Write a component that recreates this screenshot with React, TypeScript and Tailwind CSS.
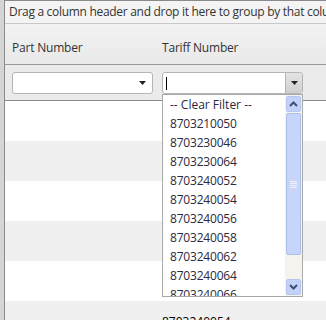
import React from 'react';

const items = [
  '8703210050',
  '8703230046',
  '8703230064',
  '8703240052',
  '8703240054',
  '8703240056',
  '8703240058',
  '8703240062',
  '8703240064',
  '8703240066',
];

const Caret = () => (
  <svg width="7" height="4" viewBox="0 0 7 4">
    <path d="M0 0h7L3.5 4z" fill="#222" />
  </svg>
);

const Chevron = ({ up }: { up?: boolean }) => (
  <svg width="9" height="6" viewBox="0 0 9 6">
    <path d={up ? 'M1 5L4.5 1.5L8 5' : 'M1 1L4.5 4.5L8 1'} stroke="#3a4f7a" strokeWidth="2" fill="none" />
  </svg>
);

export default function App() {
  return (
    <div
      className="w-[326px] h-[320px] overflow-hidden flex bg-white text-[12px] text-[#333]"
      style={{ fontFamily: '"Open Sans", "Noto Sans", sans-serif' }}
    >
      <div className="w-[4px] shrink-0 bg-[#d5d5d5]" />
      <div className="flex-1 border-l border-t border-[#8a8a8a] flex flex-col relative">
        <div className="h-[23px] shrink-0 bg-[#f4f4f4] pl-[4px] flex items-center whitespace-nowrap tracking-[-0.3px] border-b border-[#c8c8c8]">
          Drag a column header and drop it here to group by that column
        </div>
        <div className="h-[41px] shrink-0 bg-gradient-to-b from-[#f2f2f2] to-[#e9e9e9] flex items-center pt-[7px] border-b border-[#9a9a9a] tracking-[-0.2px]">
          <div className="w-[150px] pl-[7px]">Part Number</div>
          <div className="pl-[7px]">Tariff Number</div>
        </div>
        <div className="h-[36px] shrink-0 bg-[#ebebeb] flex items-start pt-[7px] border-b border-[#8a8a8a]">
          <div className="ml-[7px] w-[141px] h-[22px] bg-white border border-[#b5b5b5] rounded-[3px] flex items-center justify-end pr-[6px]">
            <Caret />
          </div>
          <div className="ml-[9px] w-[141px] h-[22px] bg-white border border-[#b5b5b5] rounded-[3px] flex items-center">
            <div className="flex-1 pl-[3px] flex items-center">
              <div className="w-px h-[13px] bg-black" />
            </div>
            <div className="w-[17px] h-full bg-gradient-to-b from-[#e4e4e4] to-[#cfcfcf] border-l border-[#b5b5b5] flex items-center justify-center rounded-r-[2px]">
              <Caret />
            </div>
          </div>
        </div>
        <div className="flex-1 flex flex-col">
          <div className="h-[40px] shrink-0 bg-white" />
          <div className="h-[40px] shrink-0 bg-[#f0f0f0]" />
          <div className="h-[40px] shrink-0 bg-white" />
          <div className="h-[40px] shrink-0 bg-[#f0f0f0]" />
          <div className="h-[40px] shrink-0 bg-white" />
          <div className="h-[40px] shrink-0 bg-[#f0f0f0] pl-[157px] pt-[12px] text-black">8703240054</div>
        </div>

        <div className="absolute left-[157px] top-[93px] w-[141px] h-[203px] bg-white border border-[#a9a9a9] flex overflow-hidden">
          <div className="flex-1 flex flex-col pl-[7px] text-[#2a2a40]">
            <div className="h-[19px] shrink-0 flex items-center">-- Clear Filter --</div>
            {items.map((it) => (
              <div key={it} className="h-[19px] shrink-0 flex items-center tracking-[-0.2px]">
                {it}
              </div>
            ))}
          </div>
          <div className="w-[17px] shrink-0 bg-[#f4f3ee] flex flex-col p-px">
            <div className="h-[16px] shrink-0 rounded-[2px] bg-[#c3d3f7] border border-[#b4c6ee] flex items-center justify-center">
              <Chevron up />
            </div>
            <div className="h-[142px] shrink-0 mt-px rounded-[2px] bg-[#c6d5f9] border border-[#aabfea] flex items-center justify-center">
              <div className="flex flex-col gap-[1px]">
                <div className="w-[7px] h-px bg-[#eef2fd]" />
                <div className="w-[7px] h-px bg-[#eef2fd]" />
                <div className="w-[7px] h-px bg-[#eef2fd]" />
                <div className="w-[7px] h-px bg-[#eef2fd]" />
              </div>
            </div>
            <div className="flex-1" />
            <div className="h-[16px] shrink-0 rounded-[2px] bg-[#c3d3f7] border border-[#b4c6ee] flex items-center justify-center">
              <Chevron />
            </div>
          </div>
        </div>
      </div>
    </div>
  );
}
